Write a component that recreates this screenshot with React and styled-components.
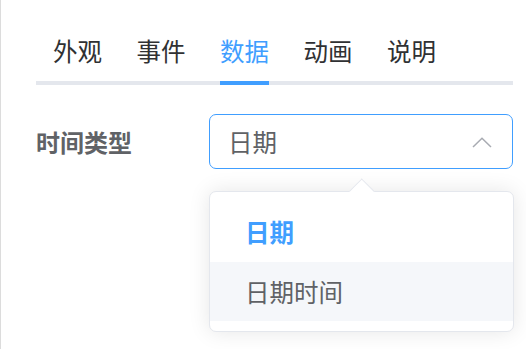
import React from 'react'
import styled, { createGlobalStyle } from 'styled-components'

const cPrimary = '#409eff'
const cText = '#303133'
const cRegular = '#606266'
const cBorder = '#e4e7ed'

const GlobalStyle = createGlobalStyle`
  html, body {
    margin: 0;
    padding: 0;
    background: #fff;
  }
  * {
    box-sizing: border-box;
    font-family: "Noto Sans CJK SC", "Noto Sans", sans-serif;
  }
`

const Screen = styled.div`
  width: 526px;
  height: 349px;
  display: flex;
  overflow: hidden;
  background: #fff;
  border-left: 1px solid #dcdcdc;
`

const Panel = styled.div`
  flex: 1;
  padding: 20px 16px 0 35px;
`

const EdgeStrip = styled.div`
  width: 3px;
  background: #2e2e2e;
`

const TabBar = styled.div`
  display: flex;
  gap: 34.5px;
  padding-left: 17px;
  border-bottom: 4px solid ${cBorder};
`

const Tab = styled.div`
  height: 61px;
  line-height: 61px;
  font-size: 24.5px;
  margin-bottom: -4px;
  color: ${p => (p.$active ? cPrimary : cText)};
  border-bottom: 4px solid ${p => (p.$active ? cPrimary : 'transparent')};
  box-sizing: content-box;
  white-space: nowrap;
`

const FormRow = styled.div`
  display: flex;
  align-items: center;
  margin-top: 29px;
`

const Label = styled.div`
  width: 173px;
  font-size: 24px;
  font-weight: 700;
  color: ${cRegular};
`

const SelectWrap = styled.div`
  position: relative;
  width: 303.5px;
`

const SelectBox = styled.div`
  height: 55px;
  display: flex;
  align-items: center;
  justify-content: space-between;
  padding: 0 20px 0 18px;
  border: 1.75px solid ${cPrimary};
  border-radius: 7px;
  font-size: 24.5px;
  color: ${cRegular};
`

const Chevron = styled.svg`
  width: 20px;
  height: 11px;
  margin-top: 2px;
`

const Dropdown = styled.div`
  position: absolute;
  top: calc(100% + 22px);
  left: 0;
  width: 305px;
  padding: 10px 0;
  background: #fff;
  border: 1.5px solid ${cBorder};
  border-radius: 7px;
  box-shadow: 0 0 21px rgba(0, 0, 0, 0.1);
`

const Arrow = styled.div`
  position: absolute;
  top: -10px;
  left: 143px;
  width: 17.5px;
  height: 17.5px;
  background: #fff;
  border-top: 1.5px solid ${cBorder};
  border-left: 1.5px solid ${cBorder};
  transform: rotate(45deg);
`

const Option = styled.div`
  height: 59.5px;
  line-height: 59.5px;
  padding: 0 35px;
  font-size: 24.5px;
  font-weight: ${p => (p.$selected ? 700 : 400)};
  color: ${p => (p.$selected ? cPrimary : cRegular)};
  background: ${p => (p.$hover ? '#f5f7fa' : '#fff')};
`

const tabs = ['外观', '事件', '数据', '动画', '说明']

export default function App() {
  return (
    <>
      <GlobalStyle />
      <Screen>
        <Panel>
          <TabBar>
            {tabs.map(t => (
              <Tab key={t} $active={t === '数据'}>{t}</Tab>
            ))}
          </TabBar>
          <FormRow>
            <Label>时间类型</Label>
            <SelectWrap>
              <SelectBox>
                <span>日期</span>
                <Chevron viewBox="0 0 20 11">
                  <path d="M1 10 L10 1.2 L19 10" fill="none" stroke="#a8abb2" strokeWidth="1.5" />
                </Chevron>
              </SelectBox>
              <Dropdown>
                <Arrow />
                <Option $selected>日期</Option>
                <Option $hover>日期时间</Option>
              </Dropdown>
            </SelectWrap>
          </FormRow>
        </Panel>
        <EdgeStrip />
      </Screen>
    </>
  )
}
